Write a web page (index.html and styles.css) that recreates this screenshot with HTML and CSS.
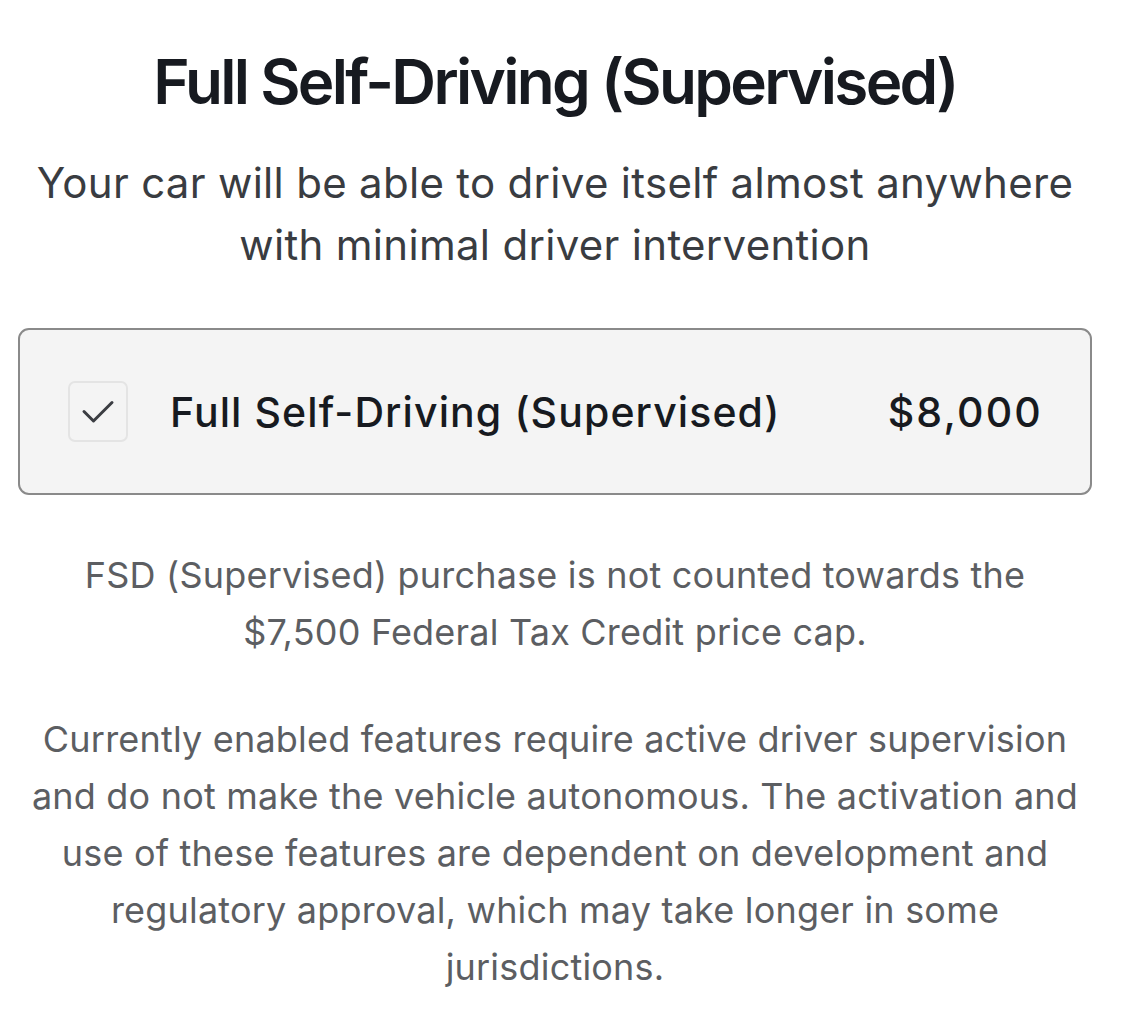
FILE: index.html
```html
<!DOCTYPE html>
<html lang="en">
<head>
  <meta charset="UTF-8">
  <meta name="viewport" content="width=device-width, initial-scale=1.0">
  <title>Full Self-Driving (Supervised)</title>
  <link rel="stylesheet" href="styles.css">
</head>
<body>
  <div class="fsd">
    <h1 class="fsd-title">Full Self-Driving (Supervised)</h1>
    <p class="fsd-lead">Your car will be able to drive itself almost anywhere with minimal driver intervention</p>

    <label class="option">
      <span class="check">
        <svg viewBox="0 0 34 26" width="34" height="26"><path d="M3 12.5l9.5 9.5L31 3.5" fill="none" stroke="#3b3d42" stroke-width="3" stroke-linecap="round" stroke-linejoin="round"/></svg>
      </span>
      <span class="option-name">Full Self-Driving (Supervised)</span>
      <span class="option-price">$8,000</span>
    </label>

    <p class="note">FSD (Supervised) purchase is not counted towards the $7,500 Federal Tax Credit price cap.</p>
    <p class="note">Currently enabled features require active driver supervision and do not make the vehicle autonomous. The activation and use of these features are dependent on development and regulatory approval, which may take longer in some jurisdictions.</p>
  </div>
</body>
</html>
```

FILE: styles.css
```css
body {
  margin: 0;
  background: #fff;
  font-family: Inter, "Liberation Sans", sans-serif;
}
.fsd {
  width: 1074px;
  margin-left: 18px;
  text-align: center;
}
.fsd-title {
  margin: 42px 0 0;
  font-size: 62px;
  font-weight: 600;
  line-height: 80px;
  color: #171a20;
  letter-spacing: -2.7px;
}
.fsd-lead {
  margin: 30px 0 0;
  font-size: 42px;
  line-height: 62px;
  color: #393c41;
  letter-spacing: 0.3px;
}
.option {
  display: flex;
  align-items: center;
  height: 163px;
  margin-top: 52px;
  padding: 0 47px 0 48px;
  background: #f4f4f4;
  border: 2px solid #8a8a8a;
  border-radius: 11px;
  text-align: left;
}
.check {
  display: flex;
  align-items: center;
  justify-content: center;
  width: 60px;
  height: 61px;
  box-sizing: border-box;
  border: 2px solid #e4e4e4;
  border-radius: 7px;
}
.option-name {
  flex: 1;
  margin-left: 42px;
  font-size: 41px;
  font-weight: 500;
  color: #171a20;
  letter-spacing: 1.1px;
}
.option-price {
  font-size: 41px;
  font-weight: 500;
  color: #171a20;
  letter-spacing: 2.2px;
}
.note {
  margin: 0 10px;
  font-size: 36px;
  line-height: 57px;
  color: #5c5e62;
  letter-spacing: 0.2px;
}
.option + .note {
  margin-top: 52px;
}
.note + .note {
  margin-top: 50px;
}
```
